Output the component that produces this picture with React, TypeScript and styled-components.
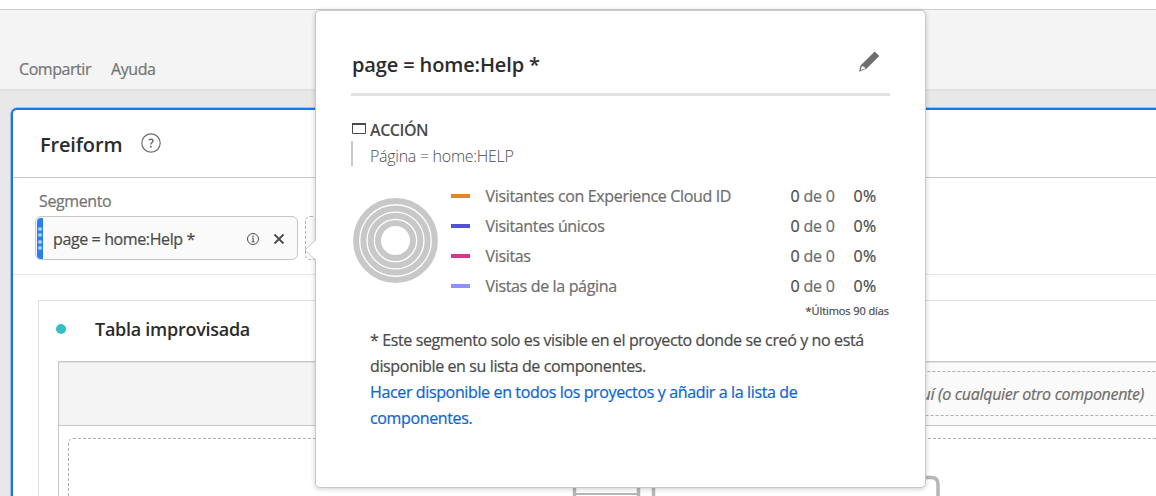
import React from "react";
import styled, { createGlobalStyle } from "styled-components";

const GlobalStyle = createGlobalStyle`
  * { box-sizing: border-box; }
  body {
    margin: 0;
    background: #e8e8e8;
    color: #4b4b4b;
    font: 400 16px/20px "Open Sans", "Noto Sans", sans-serif;
    letter-spacing: -0.38px;
    -webkit-text-stroke: 0.22px;
    overflow: hidden;
  }
`;

const Page = styled.div`
  position: relative;
  height: 496px;
  overflow: hidden;
  display: flex;
  flex-direction: column;
`;

const TopStrip = styled.div`
  flex: none;
  height: 10px;
  background: #fff;
  border-bottom: 1px solid #cfcfcf;
`;

const MenuBar = styled.nav`
  flex: none;
  display: flex;
  gap: 20px;
  height: 81px;
  padding: 49px 19px 0;
  background: #f4f4f4;
  border-bottom: 2px solid #e0e0e0;
`;

const MenuItem = styled.span`
  color: #747474;
  letter-spacing: -0.44px;
`;

const Workspace = styled.main`
  flex: 1;
  min-height: 0;
  padding: 17px 0 0 11px;
`;

const Panel = styled.section`
  width: 1180px;
  height: 420px;
  background: #fff;
  border: 2px solid #1a76e8;
  border-radius: 6px;
  box-shadow: 0 0 0 0.8px #8fb4e4;
`;

const PanelHeader = styled.header`
  display: flex;
  align-items: flex-start;
  height: 68px;
  padding: 21px 0 0 27px;
  gap: 19px;
  border-bottom: 1px solid #c8c8c8;
`;

const PanelTitle = styled.h1`
  margin: 0;
  font-size: 20px;
  line-height: 28px;
  font-weight: 600;
  letter-spacing: -0.15px;
  -webkit-text-stroke: 0;
  color: #2c2c2c;
`;

const HelpIcon = styled.svg`
  width: 20px;
  height: 20px;
  margin-top: 2px;
`;

const SegmentArea = styled.div`
  height: 97px;
  padding: 13px 0 0 22px;
  border-bottom: 1px solid #e8e8e8;
`;

const SegmentLabel = styled.div`
  height: 20px;
  margin-bottom: 5px;
  padding-left: 4px;
  color: #747474;
`;

const SegmentRow = styled.div`
  display: flex;
  gap: 7px;
`;

const Chip = styled.div`
  display: flex;
  align-items: center;
  width: 263px;
  height: 44px;
  padding: 1px 12px 0 1px;
  background: #fafafa;
  border: 1px solid #c6c6c6;
  border-radius: 6px;
`;

const ChipGrip = styled.div`
  display: flex;
  flex-direction: column;
  align-items: center;
  justify-content: center;
  gap: 2.3px;
  width: 6px;
  height: 41px;
  background: #2680eb;
  border-radius: 4px 0 0 4px;
`;

const GripDot = styled.i`
  width: 4px;
  height: 4px;
  border-radius: 50%;
  background: #a8ccf7;
`;

const ChipText = styled.span`
  flex: 1;
  padding: 1px 0 0 10px;
`;

const ChipInfo = styled.svg`
  width: 14px;
  height: 14px;
  margin-right: 13px;
`;

const ChipClose = styled.svg`
  width: 12px;
  height: 12px;
`;

const SegmentDrop = styled.div`
  width: 200px;
  height: 44px;
  border: 1px dashed #b0b0b0;
  border-radius: 5px;
  background: #fafafa;
`;

const Card = styled.article`
  margin: 25px 0 0 25px;
  height: 240px;
  border: 1px solid #dedede;
`;

const CardHeader = styled.header`
  display: flex;
  align-items: center;
  gap: 29px;
  height: 24px;
  margin: 16px 0 20px 17px;
`;

const StatusDot = styled.i`
  width: 10px;
  height: 10px;
  border-radius: 50%;
  background: #33bfc6;
`;

const CardTitle = styled.h2`
  margin: 0;
  font-size: 18px;
  line-height: 24px;
  font-weight: 600;
  letter-spacing: -0.27px;
  -webkit-text-stroke: 0;
  color: #2c2c2c;
`;

const Table = styled.div`
  margin-left: 19px;
  height: 200px;
  border: 1px solid #c6c6c6;
`;

const TableHead = styled.div`
  display: flex;
  height: 64px;
  background: #f4f4f4;
  border-top: 1px solid #e2e2e2;
  border-bottom: 1px solid #c6c6c6;
`;

const RowHeadCell = styled.div`
  width: 420px;
`;

const ColumnDropCell = styled.div`
  flex: 1;
  padding-top: 8px;
  background: #fafafa;
`;

const ColumnDrop = styled.div`
  display: flex;
  align-items: center;
  justify-content: flex-end;
  height: 45px;
  padding-right: 42px;
  border: 1px dashed #b0b0b0;
  border-radius: 4px;
  font-style: italic;
  letter-spacing: -0.3px;
  color: #6e6e6e;
`;

const TableDrop = styled.div`
  display: flex;
  justify-content: center;
  margin: 12px 9px 0;
  height: 150px;
  border: 1px dashed #b0b0b0;
  border-radius: 5px;
`;

const EmptyArt = styled.svg`
  width: 370px;
  height: 24px;
  margin: 34px 0 0 265px;
`;

const Popover = styled.aside`
  position: absolute;
  left: 315px;
  top: 10px;
  width: 611px;
  height: 478px;
  padding: 40px 35px 0;
  background: #fff;
  border: 1px solid #c8c8c8;
  border-radius: 5px;
  box-shadow: 0 1px 5px rgba(0, 0, 0, 0.2);
`;

const PopoverArrow = styled.svg`
  position: absolute;
  left: -12px;
  top: 227px;
  width: 13px;
  height: 24px;
`;

const PopoverHeader = styled.header`
  display: flex;
  justify-content: space-between;
  height: 45px;
  width: 539px;
  border-bottom: 3px solid #e1e1e1;
`;

const PopoverTitle = styled.h2`
  margin: 0;
  padding-left: 1px;
  font-size: 20px;
  line-height: 28px;
  font-weight: 600;
  letter-spacing: -0.13px;
  -webkit-text-stroke: 0;
  color: #2c2c2c;
`;

const EditIcon = styled.svg`
  width: 22px;
  height: 22px;
  margin-right: 10px;
`;

const Definition = styled.section`
  padding-top: 23px;
  -webkit-text-stroke: 0;
`;

const DefinitionHead = styled.div`
  display: flex;
  align-items: center;
  gap: 4px;
  height: 22px;
  font-weight: 600;
  letter-spacing: -0.45px;
`;

const WindowIcon = styled.svg`
  width: 15px;
  height: 13px;
  margin-top: -3px;
`;

const DefinitionRule = styled.div`
  height: 25px;
  padding: 5px 0 0 17px;
  border-left: 2px solid #cacaca;
  font-weight: 300;
  letter-spacing: -0.28px;
  color: #4b4b4b;
`;

const Stats = styled.section`
  display: flex;
  margin-top: 15px;
`;

const Rings = styled.svg`
  flex: none;
  width: 87px;
  height: 87px;
  margin: 16px 11.5px 0 1px;
`;

const Metrics = styled.div`
  width: 438.5px;
`;

const MetricRow = styled.div`
  display: grid;
  grid-template-columns: 35px 305px 63px 36px;
  align-items: center;
  height: 30px;
`;

const Swatch = styled.i<{ $color: string }>`
  width: 19px;
  height: 4px;
  margin-top: -1px;
  background: ${(p) => p.$color};
`;

const MetricName = styled.span`
  color: #6e6e6e;
  letter-spacing: -0.34px;
`;

const Muted = styled.span`
  color: #6e6e6e;
`;

const Value = styled.span`
  letter-spacing: -0.18px;
`;

const Percent = styled.span`
  letter-spacing: 0.3px;
`;

const Footnote = styled.div`
  font-size: 11px;
  line-height: 14px;
  letter-spacing: -0.08px;
  text-align: right;
  padding-top: 3px;
`;

const Note = styled.p`
  margin: 9px 0 0;
  padding-left: 19px;
  line-height: 26px;
  white-space: nowrap;
`;

const NoteLink = styled.a`
  color: #0d66d0;
  letter-spacing: -0.365px;
`;

const metrics = [
  { name: "Visitantes con Experience Cloud ID", color: "#e68523" },
  { name: "Visitantes únicos", color: "#5151d3" },
  { name: "Visitas", color: "#d83790" },
  { name: "Vistas de la página", color: "#9090fa" },
];

export default function App() {
  return (
    <Page>
      <GlobalStyle />
      <TopStrip />
      <MenuBar>
        <MenuItem>Compartir</MenuItem>
        <MenuItem>Ayuda</MenuItem>
      </MenuBar>
      <Workspace>
        <Panel>
          <PanelHeader>
            <PanelTitle>Freiform</PanelTitle>
            <HelpIcon viewBox="0 0 20 20" fill="none" stroke="#6e6e6e">
              <circle cx="10" cy="10" r="9.2" strokeWidth="1.2" />
              <path d="M7.8 7.1c.5-.6 1.2-.9 2.1-.9 1.3 0 2.1.7 2.1 1.7 0 1.6-2.1 1.6-2.1 3.5" strokeWidth="1.5" />
              <circle cx="9.9" cy="13.8" r="1" fill="#6e6e6e" stroke="none" />
            </HelpIcon>
          </PanelHeader>
          <SegmentArea>
            <SegmentLabel>Segmento</SegmentLabel>
            <SegmentRow>
              <Chip>
                <ChipGrip>
                  <GripDot />
                  <GripDot />
                  <GripDot />
                  <GripDot />
                </ChipGrip>
                <ChipText>page = home:Help *</ChipText>
                <ChipInfo viewBox="0 0 14 14" fill="none" stroke="#4b4b4b">
                  <circle cx="7" cy="7" r="5.5" />
                  <path d="M5.8 6.2H7.2V9.7M5.6 9.8H8.6" />
                  <circle cx="7" cy="4.2" r=".8" fill="#4b4b4b" stroke="none" />
                </ChipInfo>
                <ChipClose viewBox="0 0 12 12" stroke="#4b4b4b" strokeWidth="1.8">
                  <path d="M1.5 1.5L10.5 10.5M10.5 1.5L1.5 10.5" />
                </ChipClose>
              </Chip>
              <SegmentDrop />
            </SegmentRow>
          </SegmentArea>
          <Card>
            <CardHeader>
              <StatusDot />
              <CardTitle>Tabla improvisada</CardTitle>
            </CardHeader>
            <Table>
              <TableHead>
                <RowHeadCell />
                <ColumnDropCell>
                  <ColumnDrop>aquí (o cualquier otro componente)</ColumnDrop>
                </ColumnDropCell>
              </TableHead>
              <TableDrop>
                <EmptyArt viewBox="0 0 370 24" fill="none" stroke="#b6b6b6">
                  <path d="M3.5 24V0M67.5 24V0" strokeWidth="3.5" />
                  <path d="M3 21H68" strokeWidth="2" />
                  <path d="M82.500 24V10Q82.500 4.500 89 4.500H360Q367 4.500 367 11V24" strokeWidth="3.500" />
                </EmptyArt>
              </TableDrop>
            </Table>
          </Card>
        </Panel>
      </Workspace>

      <Popover>
        <PopoverArrow viewBox="0 0 13 24">
          <path d="M13 1L1 12L13 23Z" fill="#fff" />
          <path d="M12 1.5L1 12L12 22.5" fill="none" stroke="#c8c8c8" />
        </PopoverArrow>
        <PopoverHeader>
          <PopoverTitle>page = home:Help *</PopoverTitle>
          <EditIcon viewBox="0 0 22 22" fill="#6e6e6e">
            <path d="M16.7 0.5L21.2 4.9L8.7 17.5L1 20.8L2.5 14.6ZM3.8 15.4L2.6 19L7.1 17.4L6.7 16L5.3 16.1L5.4 14.7Z" fillRule="evenodd" />
          </EditIcon>
        </PopoverHeader>
        <Definition>
          <DefinitionHead>
            <WindowIcon viewBox="0 0 15 13" fill="none" stroke="#4b4b4b">
              <path d="M1.5 1.5H14.5V11.5H1.5Z" />
              <path d="M1 2H15" strokeWidth="2" />
            </WindowIcon>
            ACCIÓN
          </DefinitionHead>
          <DefinitionRule>Página = home:HELP</DefinitionRule>
        </Definition>
        <Stats>
          <Rings viewBox="0 0 87 87" fill="none" stroke="#c8c8c8" strokeWidth="6">
            <circle cx="43.5" cy="43.5" r="39.4" />
            <circle cx="43.5" cy="43.5" r="32.1" />
            <circle cx="43.5" cy="43.5" r="24.8" />
            <circle cx="43.5" cy="43.5" r="17.5" />
          </Rings>
          <Metrics>
            {metrics.map((m) => (
              <MetricRow key={m.name}>
                <Swatch $color={m.color} />
                <MetricName>{m.name}</MetricName>
                <Value>
                  0 <Muted>de 0</Muted>
                </Value>
                <Percent>0%</Percent>
              </MetricRow>
            ))}
            <Footnote>*Últimos 90 días</Footnote>
          </Metrics>
        </Stats>
        <Note>
          * Este segmento solo es visible en el proyecto donde se creó y no está
          <br />
          disponible en su lista de componentes.
          <br />
          <NoteLink>
            Hacer disponible en todos los proyectos y añadir a la lista de
            <br />
            componentes.
          </NoteLink>
        </Note>
      </Popover>
    </Page>
  );
}
